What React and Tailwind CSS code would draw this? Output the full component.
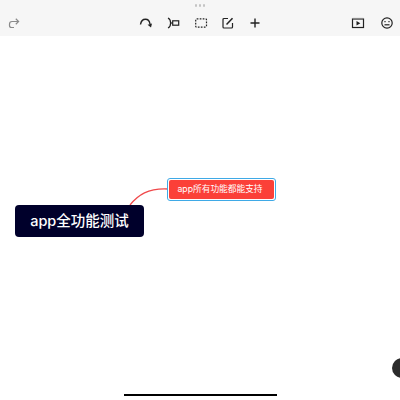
const font = { fontFamily: '"Inter", "Noto Sans CJK SC", sans-serif' };

function ToolIcon({ className, children, stroke = '#222' }) {
  return (
    <svg viewBox="0 0 14 14" className={className} fill="none" stroke={stroke} strokeWidth="1.2">
      {children}
    </svg>
  );
}

export default function App() {
  return (
    <div className="relative w-[400px] h-[400px] bg-white overflow-hidden antialiased" style={font}>
      <div className="relative h-9 bg-[#f6f6f6]">
        <div className="flex justify-center gap-[2px] pt-[4px]">
          <span className="w-[2px] h-[3px] rounded-full bg-[#c4c4c4]" />
          <span className="w-[2px] h-[3px] rounded-full bg-[#c4c4c4]" />
          <span className="w-[2px] h-[3px] rounded-full bg-[#c4c4c4]" />
        </div>
        <div className="flex items-center h-[14px] mt-[9px] pl-[7px] pr-[6px]">
          <ToolIcon className="w-[14px] h-[14px]" stroke="#8a8a8a">
            <path d="M11.500 5.500H5A2.600 2.600 0 0 0 2.500 8v1.500A2 2 0 0 0 4.500 11.500H7" />
            <path d="M8.800 2.800l2.800 2.700-2.800 2.700" />
          </ToolIcon>
          <div className="flex items-center gap-[13.250px] ml-[118px]">
            <ToolIcon className="w-[14px] h-[14px]">
              <path d="M1.500 8.500C2 5 4 3.200 6.500 3.200S10.500 5 11 8" strokeWidth="1.400" />
              <path d="M8.600 8.800L13 7.400l-1 4.200z" fill="#222" stroke="none" />
            </ToolIcon>
            <ToolIcon className="w-[14px] h-[14px]">
              <path d="M2 2c2.200 1 2.600 3 2.600 5S4.200 11 2 12" />
              <path d="M4.600 7h2" />
              <rect x="6.700" y="4.800" width="6" height="4.400" />
            </ToolIcon>
            <ToolIcon className="w-[14px] h-[14px]">
              <rect x="1.700" y="2.800" width="10.800" height="8.400" rx="1" strokeDasharray="1.700 1.300" />
            </ToolIcon>
            <ToolIcon className="w-[14px] h-[14px]">
              <path d="M7 2.500H3A1 1 0 0 0 2 3.500v7.500a1 1 0 0 0 1 1h7.500a1 1 0 0 0 1-1V7" />
              <path d="M5.500 8.500L11.500 2.200" strokeWidth="1.500" />
            </ToolIcon>
            <ToolIcon className="w-[14px] h-[14px]">
              <path d="M7 2.500v9M2.500 7h9" strokeWidth="1.400" />
            </ToolIcon>
          </div>
          <div className="flex items-center gap-[15px] ml-auto">
            <ToolIcon className="w-[14px] h-[14px]">
              <rect x="1.500" y="3" width="11" height="8.500" />
              <path d="M1.500 2.500h11" stroke="#888" />
              <path d="M5.500 5l3.800 2.200-3.800 2.300z" fill="#222" stroke="none" />
            </ToolIcon>
            <ToolIcon className="w-[14px] h-[14px]">
              <circle cx="7" cy="7" r="5.200" />
              <path d="M4.500 8.800h5" />
              <path d="M5 5v1.200M9 5v1.200" />
            </ToolIcon>
          </div>
        </div>
      </div>

      {/* connector between the two nodes */}
      <svg className="absolute left-0 top-0 w-[400px] h-[400px]" viewBox="0 0 400 400" fill="none">
        <path d="M130 205C138 195 148 188 168 189" stroke="#f0484a" strokeWidth="1.300" />
      </svg>

      <div className="absolute left-[15px] top-[205px] w-[129px] h-8 rounded-[4px] bg-[#00002b] text-white text-[14.500px] font-medium leading-8 text-center">
        app全功能测试
      </div>

      <div className="absolute left-[167px] top-[178px] w-[109px] h-[23px] rounded-[3px] border border-[#3fa9e6] bg-white p-[1px]">
        <div className="h-full pr-[3px] rounded-[2px] bg-[#fb4038] text-white text-[8.700px] leading-[19px] text-center whitespace-nowrap">
          app所有功能都能支持
        </div>
      </div>

      <div className="absolute left-[392px] top-[358px] w-5 h-5 rounded-full bg-[#2b2b2b]" />
      <div className="absolute left-[124px] top-[394px] w-[153px] h-[2px] bg-black" />
    </div>
  );
}
